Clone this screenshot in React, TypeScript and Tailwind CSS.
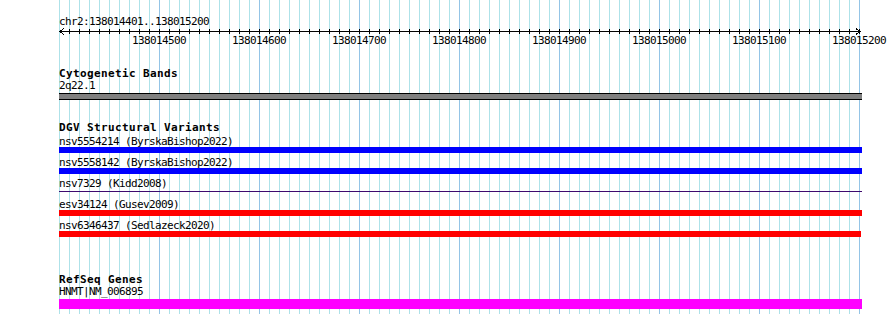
import React from 'react';

// ruler ticks: one every 10 bp, labels every 100 bp
const START = 138014401;
const TICKS = Array.from({ length: 80 }, (_, i) => (i + 1) * 10);
const GRID = Array.from({ length: 81 }, (_, i) => i * 10);
const LABELS = Array.from({ length: 8 }, (_, i) => 138014500 + i * 100);

interface Variant {
  name: string;
  color: 'blue' | 'red' | 'thin';
  short?: boolean;
}

const VARIANTS: Variant[] = [
  { name: 'nsv5554214 (ByrskaBishop2022)', color: 'blue' },
  { name: 'nsv5558142 (ByrskaBishop2022)', color: 'blue' },
  { name: 'nsv7329 (Kidd2008)', color: 'thin' },
  { name: 'esv34124 (Gusev2009)', color: 'red' },
  { name: 'nsv6346437 (Sedlazeck2020)', color: 'red', short: true },
];

function Grid() {
  return (
    <svg width="803" height="314" className="absolute inset-0" shapeRendering="crispEdges">
      {GRID.map((g) => (
        <line
          key={g}
          x1={g + 0.5}
          y1="0"
          x2={g + 0.5}
          y2="314"
          stroke={g > 0 && g % 100 === 0 ? '#94c4e6' : '#aee2e9'}
          strokeWidth="1"
        />
      ))}
    </svg>
  );
}

function Ruler() {
  return (
    <svg width="803" height="7" className="block" shapeRendering="crispEdges">
      <line x1="1" y1="3.5" x2="801" y2="3.5" stroke="#000" strokeWidth="1" />
      {TICKS.map((t) => (
        <line key={t} x1={t + 0.5} y1="1" x2={t + 0.5} y2="6" stroke="#000" strokeWidth="1" />
      ))}
      <polyline points="5,0.5 1,3.5 5,6.5" fill="none" stroke="#000" strokeWidth="1" />
      <polyline points="797,0.5 801,3.5 797,6.5" fill="none" stroke="#000" strokeWidth="1" />
    </svg>
  );
}

function Title({ children }: { children: React.ReactNode }) {
  return (
    <div className="h-[12px] leading-[12px] text-[11px] font-bold tracking-[0.38px] whitespace-nowrap">
      {children}
    </div>
  );
}

const txt = 'text-[11px] tracking-[-0.62px] whitespace-nowrap';

export default function App() {
  return (
    <div className="w-[890px] h-[314px] bg-white overflow-hidden flex text-black font-['DejaVu_Sans_Mono','Liberation_Mono',monospace]">
      <div className="relative ml-[59px] w-[803px] h-[314px] shrink-0">
        <Grid />
        <div className="relative">
          {/* ruler */}
          <div className="pt-[16px]">
            <div className={`h-[12px] leading-[12px] ${txt}`}>chr2:{START}..138015200</div>
            <Ruler />
            <div className={`flex pl-[50px] h-[12px] leading-[12px] ${txt}`}>
              {LABELS.map((l) => (
                <div key={l} className="w-[100px] shrink-0 text-center">
                  {l}
                </div>
              ))}
            </div>
          </div>

          {/* cytogenetic bands */}
          <div className="mt-[21px]">
            <Title>Cytogenetic Bands</Title>
            <div className={`h-[12px] leading-[12px] ${txt}`}>2q22.1</div>
            <div className="mt-[1px] h-[7px] bg-[#808080] border-y border-black" />
          </div>

          {/* DGV */}
          <div className="mt-[22px]">
            <Title>DGV Structural Variants</Title>
            <div className="mt-[2px] flex flex-col">
              {VARIANTS.map((v) => (
                <div key={v.name} className="h-[21px]">
                  <div className={`h-[11px] leading-[11px] ${txt}`}>{v.name}</div>
                  {v.color === 'thin' ? (
                    <div className="h-[6px] pt-[2px]">
                      <div className="h-[1px] bg-[#3e0a6e]" />
                    </div>
                  ) : (
                    <div
                      className={`h-[6px] ${v.color === 'blue' ? 'bg-[#0000ff]' : 'bg-[#ff0000]'} ${
                        v.short ? 'w-[802px]' : 'w-full'
                      }`}
                    />
                  )}
                </div>
              ))}
            </div>
          </div>

          {/* RefSeq */}
          <div className="mt-[33px]">
            <Title>RefSeq Genes</Title>
            <div className={`h-[12px] leading-[12px] ${txt}`}>HNMT|NM_006895</div>
            <div className="mt-[1px] h-[10px] bg-[#ff00ff]" />
          </div>
        </div>
      </div>
    </div>
  );
}
